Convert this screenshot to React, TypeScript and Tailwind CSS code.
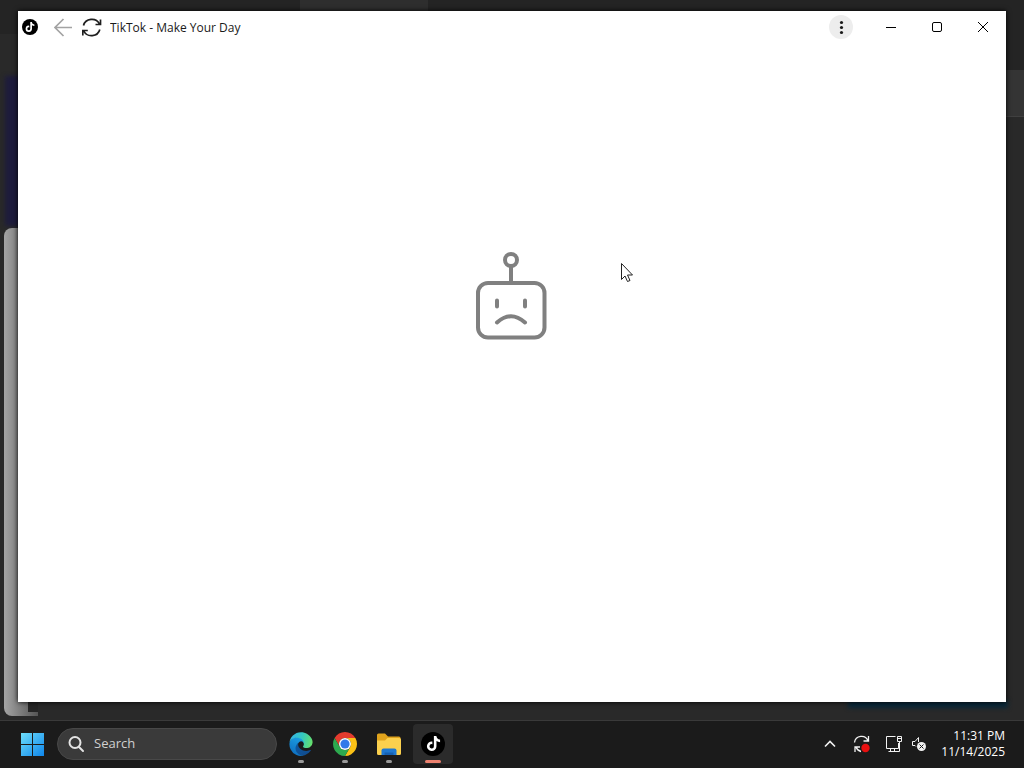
import React from "react";
import { FaTiktok } from "react-icons/fa6";

const TikTokBadge = ({ className, glyph }: { className: string; glyph: string }) => (
  <span className={`flex items-center justify-center rounded-full bg-black text-white ${className}`} aria-hidden>
    <FaTiktok className={glyph} />
  </span>
);

const EdgeLogo = () => (
  <svg className="w-6 h-6" viewBox="0 0 265 260" aria-hidden>
    <defs>
      <linearGradient id="edge-deep" x1="0" y1="0" x2="1" y2="1">
        <stop offset="0" stopColor="#0c59a4" />
        <stop offset="1" stopColor="#114a8b" />
      </linearGradient>
      <linearGradient id="edge-mid" x1="0.6" y1="0" x2="0.2" y2="1">
        <stop offset="0" stopColor="#1b9de2" />
        <stop offset="1" stopColor="#0d6bbd" />
      </linearGradient>
      <linearGradient id="edge-top" x1="0" y1="0.4" x2="1" y2="0.6">
        <stop offset="0" stopColor="#35b4e6" />
        <stop offset="0.5" stopColor="#34c8c0" />
        <stop offset="1" stopColor="#66e06a" />
      </linearGradient>
    </defs>
    <path fill="url(#edge-deep)" d="M235.7 195.5a94 94 0 0 1-10.6 4.7 102 102 0 0 1-35.9 6.4c-47.3 0-88.5-32.5-88.5-74.3a31.5 31.5 0 0 1 16.4-27.3c-42.8 1.8-53.8 46.4-53.8 72.5 0 73.9 68.1 81.4 82.8 81.4 7.9 0 19.8-2.3 27-4.6l1.3-.4a128 128 0 0 0 66.6-52.8 4 4 0 0 0-5.3-5.6Z" />
    <path fill="url(#edge-mid)" d="M110.3 246.3A79 79 0 0 1 87.6 225a80.7 80.7 0 0 1 29.5-120c3.2-1.5 8.5-4 15.6-4a32.4 32.4 0 0 1 25.7 13 31.9 31.9 0 0 1 6.3 18.7c0-.2 24.5-79.6-80-79.6-43.9 0-80 41.7-80 78.2a130 130 0 0 0 12.1 56 128 128 0 0 0 156.4 67.1 75.6 75.6 0 0 1-62.8-8Z" />
    <path fill="url(#edge-top)" d="M156.9 153.8c-.8 1-3.3 2.5-3.3 5.6 0 2.6 1.7 5.2 4.8 7.3 14.3 10 41.4 8.6 41.5 8.6a59.6 59.6 0 0 0 30.3-8.3 61.4 61.4 0 0 0 30.4-52.9c.3-22.4-8-37.3-11.3-43.9C228.1 28.8 182.3 0 132.6 0a128 128 0 0 0-128 126.2c.5-36.5 36.8-66 80-66 3.5 0 23.5.3 42 10 16.3 8.6 24.9 19 30.8 29.3 6.2 10.6 7.3 24.1 7.3 29.5s-2.7 13.3-7.8 24.8Z" />
  </svg>
);

const ChromeLogo = () => (
  <svg className="w-6 h-6" viewBox="0 0 24 24" aria-hidden>
    <path fill="#e33b2e" d="M12 6H22.39A12 12 0 0 0 1.61 6L6.8 15A6 6 0 0 1 12 6Z" />
    <path fill="#fbc116" d="M22.39 6H12A6 6 0 0 1 17.2 15L12 24A12 12 0 0 0 22.39 6Z" />
    <path fill="#2da94f" d="M1.61 6L6.8 15A6 6 0 0 0 17.2 15L12 24A12 12 0 0 1 1.61 6Z" />
    <circle cx="12" cy="12" r="6" fill="#fff" />
    <circle cx="12" cy="12" r="4.6" fill="#3279ea" />
  </svg>
);

const FolderLogo = () => (
  <svg className="w-6 h-6" viewBox="0 0 24 24" aria-hidden>
    <path fill="#e0a31c" d="M0 3a1.5 1.5 0 0 1 1.5-1.5H8L11 4.5H22A1.5 1.5 0 0 1 23.5 6V14H0Z" />
    <path fill="#fbd04e" d="M0 8.500H8L10.500 6H22.500A1.500 1.500 0 0 1 24 7.500V21.500A1.500 1.500 0 0 1 22.500 23H1.500A1.500 1.500 0 0 1 0 21.500Z" />
    <path fill="#1f78d0" d="M4.500 23V18.500A2 2 0 0 1 6.500 16.500H17.500A2 2 0 0 1 19.500 18.500V23Z" />
    <path fill="#1660b0" d="M7.500 20.500H16.500V23H7.500Z" />
  </svg>
);

const WindowsLogo = () => (
  <svg className="w-6 h-6" viewBox="0 0 24 24" aria-hidden>
    <defs>
      <linearGradient id="win" x1="0" y1="0" x2="24" y2="24" gradientUnits="userSpaceOnUse">
        <stop offset="0" stopColor="#6fe0fb" />
        <stop offset="1" stopColor="#0c83ea" />
      </linearGradient>
    </defs>
    <path fill="url(#win)" d="M0 1H11V12H0ZM12 1H23V12H12ZM0 13H11V24H0ZM12 13H23V24H12Z" />
  </svg>
);

const SadRobot = () => (
  <svg className="w-[76px] h-[92px]" viewBox="0 0 76 92" fill="none" stroke="#808080" strokeWidth="4" strokeLinecap="round" role="img" aria-label="Page could not be loaded">
    <circle cx="37" cy="10" r="6" />
    <path d="M37 16V33" />
    <rect x="4" y="33" width="66.500" height="54.500" rx="10" />
    <path d="M23 50.500V56.500M51 50.500V56.500" />
    <path d="M23 72.500Q37 60 51 72.500" />
  </svg>
);

const TitleBar = () => (
  <header className="flex items-center h-8 pl-1">
    <TikTokBadge className="w-4 h-4" glyph="w-[10px] h-[10px]" />
    <button className="ml-4 w-[18px]" aria-label="Back">
      <svg className="w-[18px] h-5" viewBox="0 0 18 20" fill="none" stroke="#a3a3a3" strokeWidth="1.700">
        <path d="M18 10.500H1M9.500 2L1 10.500L9.500 19" />
      </svg>
    </button>
    <button className="ml-[10px]" aria-label="Reload">
      <svg className="w-5 h-5" viewBox="0 0 20 20" fill="none" stroke="#1f1f1f" strokeWidth="1.700">
        <path d="M1.500 8.500A8.500 8 0 0 1 17.500 7M18.500 2.500V7.500H13.500M17.800 12.500A8.500 8 0 0 1 1.800 14M0.800 18.500V13.500H5.800" />
      </svg>
    </button>
    <h1 className="ml-2 flex-1 truncate pt-0.5 text-xs text-[#1a1a1a]">TikTok - Make Your Day</h1>
    <button className="flex items-center justify-center w-6 h-6 mr-[15px] rounded-full bg-[#ededed]" aria-label="More options">
      <svg className="w-4 h-4" viewBox="0 0 16 16" fill="#1a1a1a">
        <circle cx="8.500" cy="3.500" r="1.600" />
        <circle cx="8.500" cy="8.500" r="1.600" />
        <circle cx="8.500" cy="13.500" r="1.600" />
      </svg>
    </button>
    <button className="flex items-center justify-center w-[46px] h-8" aria-label="Minimize">
      <svg className="w-3 h-3" viewBox="0 0 12 12" stroke="#000"><path d="M1 6.500H11" /></svg>
    </button>
    <button className="flex items-center justify-center w-[46px] h-8" aria-label="Maximize">
      <svg className="w-3 h-3" viewBox="0 0 12 12" fill="none" stroke="#000"><rect x="1.500" y="1.500" width="9" height="9" rx="1.500" /></svg>
    </button>
    <button className="flex items-center justify-center w-[46px] h-8" aria-label="Close">
      <svg className="w-3 h-3" viewBox="0 0 12 12" stroke="#000"><path d="M1 1L11 11M11 1L1 11" /></svg>
    </button>
  </header>
);

// The dimmed windows that sit behind the app window.
const Backdrop = () => (
  <div className="absolute inset-0 overflow-hidden bg-[#292929]" aria-hidden>
    <div className="absolute inset-x-0 top-0 h-[34px] bg-[#242424]" />
    <div className="absolute left-[300px] top-0 h-3 w-32 bg-[#2e2e2e]" />
    <div className="absolute right-0 top-[34px] h-9 w-5 bg-[#242424]" />
    <div className="absolute right-0 top-[70px] h-[46px] w-5 bg-[#343434]" />
    <div className="absolute right-0 top-[116px] h-px w-5 bg-[#404040]" />
    <div className="absolute left-[5px] top-[76px] h-[150px] w-5 bg-[#1d1b3c] blur-[2px]" />
    <div className="absolute left-1 top-[228px] bottom-1 w-[34px] rounded-l-lg bg-linear-to-r from-[#a5a5a5] to-[#555555]" />
    <div className="absolute left-7 bottom-2 h-3 w-[10px] bg-[#252525]" />
    <div className="absolute right-4 bottom-3 h-2 w-40 bg-[#08283a] blur-[2px]" />
  </div>
);

type TaskProps = { label: string; active?: boolean; children: React.ReactNode };

const TaskButton = ({ label, active, children }: TaskProps) => (
  <button
    aria-label={label}
    className={`flex flex-col items-center justify-end w-10 h-10 pb-px gap-1 rounded ${active ? "bg-[#2b2b2b]" : ""}`}
  >
    {children}
    <span className={`rounded-full ${active ? "w-4 h-[3px] bg-[#ed8270]" : "w-[6px] h-[3px] bg-[#9a9a9a]"}`} />
  </button>
);

const Taskbar = () => (
  <footer className="flex items-center h-12 pl-[13px] pr-[19px] pb-0.5 gap-1 border-t border-[#3a3a3a] bg-[#1b1b1b] text-white">
    <button className="flex items-center justify-center w-10 h-10" aria-label="Start">
      <WindowsLogo />
    </button>
    <label className="flex items-center gap-2 w-[220px] h-8 pl-[10px] rounded-full border border-[#484848] bg-[#3a3a3a]">
      <svg className="w-[18px] h-[18px] shrink-0" viewBox="0 0 18 18" fill="none" stroke="#e4e4e4" strokeWidth="2" aria-hidden>
        <circle cx="7" cy="7.500" r="5.500" />
        <path d="M11 12L15 16" strokeLinecap="round" />
      </svg>
      <input type="text" aria-label="Search" placeholder="Search" className="w-full min-w-0 bg-transparent text-[13px] placeholder:text-[#d0d0d0] outline-none" />
    </label>
    <nav className="flex items-center gap-1">
      <TaskButton label="Microsoft Edge"><EdgeLogo /></TaskButton>
      <TaskButton label="Google Chrome"><ChromeLogo /></TaskButton>
      <TaskButton label="File Explorer"><FolderLogo /></TaskButton>
      <TaskButton label="TikTok" active>
        <TikTokBadge className="w-6 h-6" glyph="w-[15px] h-[15px]" />
      </TaskButton>
    </nav>
    <div className="flex items-center ml-auto">
      <button className="w-3" aria-label="Show hidden icons">
        <svg className="w-3 h-3" viewBox="0 0 12 12" fill="none" stroke="#f2f2f2" strokeWidth="1.600"><path d="M1 8.500L6 3.500L11 8.500" /></svg>
      </button>
      <button className="ml-4" aria-label="Updates">
        <svg className="w-5 h-5" viewBox="0 0 20 20" fill="none" stroke="#f2f2f2" strokeWidth="1.300">
          <path d="M2.500 8.500A7 7 0 0 1 16 7M16.500 2V7H11.500M9 17.500A7 7 0 0 1 4 13M3 18V13H8" />
          <circle cx="13.500" cy="14" r="4.200" fill="#e81010" stroke="none" />
        </svg>
      </button>
      <button className="ml-3 w-5" aria-label="Network">
        <svg className="w-5 h-5" viewBox="0 0 20 20" fill="none" stroke="#f2f2f2">
          <path d="M11.500 2.500H2.500V14.500H14.500V9M6.500 14.500V17.500M10.500 14.500V17.500M4.500 17.500H12.500" />
          <path d="M13.500 2.500H17.500V7.500H13.500ZM13.500 4.500H17.500M15.500 7.500V17.500H12" />
        </svg>
      </button>
      <button className="ml-[7px] w-4" aria-label="Volume">
        <svg className="w-4 h-4" viewBox="0 0 16 16" fill="none" stroke="#f2f2f2">
          <path d="M7.500 6V1.500L4 5.500H1.500V9.500H4L5 10.500" />
          <circle cx="10.500" cy="10.500" r="4.500" fill="#f2f2f2" stroke="none" />
          <path d="M8.500 8.500L12.500 12.500M12.500 8.500L8.500 12.500" stroke="#1b1b1b" />
        </svg>
      </button>
      <button className="ml-[14px] text-right text-xs leading-4" aria-label="Clock">
        <time className="block">11:31 PM</time>
        <time className="block">11/14/2025</time>
      </button>
    </div>
  </footer>
);

export default function App() {
  return (
    <div className="flex flex-col h-screen overflow-hidden font-['Open_Sans','Noto_Sans',sans-serif]">
      <main className="relative flex flex-1 min-h-0 px-[18px] pt-[11px] pb-[18px]">
        <Backdrop />
        <section className="relative flex flex-1 flex-col bg-white shadow-[0_0_5px_#000]">
          <TitleBar />
          <div className="flex flex-1 justify-center pt-[207px]">
            <SadRobot />
          </div>
        </section>
        <svg className="absolute left-[621px] top-[263px] w-3 h-5" viewBox="0 0 12 20" fill="#fff" stroke="#222" aria-hidden>
          <path d="M0.500 0.500V16.500L4 13L6.500 18.500L9 17.500L6.500 12H11.500Z" />
        </svg>
      </main>
      <Taskbar />
    </div>
  );
}
